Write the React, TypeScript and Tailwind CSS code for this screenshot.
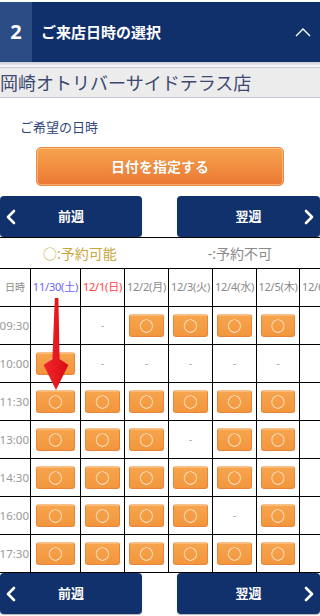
import React from 'react'

const FONT = "font-['Noto_Sans','Noto_Sans_CJK_JP',sans-serif]"

const dates = [
  { label: '11/30(土)', color: 'text-[#6d5ff7]', w: 'w-[50px]', pad: 'px-[5px]' },
  { label: '12/1(日)', color: 'text-[#ff3f3f]', w: 'w-[44px]', pad: 'px-[4px]' },
  { label: '12/2(月)', color: 'text-[#8a8a8a]', w: 'w-[44px]', pad: 'px-[4px]' },
  { label: '12/3(火)', color: 'text-[#8a8a8a]', w: 'w-[44px]', pad: 'px-[4px]' },
  { label: '12/4(水)', color: 'text-[#8a8a8a]', w: 'w-[44px]', pad: 'px-[4px]' },
  { label: '12/5(木)', color: 'text-[#8a8a8a]', w: 'w-[43px]', pad: 'px-[4px]' },
  { label: '12/6(金)', color: 'text-[#8a8a8a]', w: 'w-[44px]', pad: 'px-[4px]' },
]

// 1 = bookable, 0 = not
const slots: { time: string; open: number[] }[] = [
  { time: '09:30', open: [0, 0, 1, 1, 1, 1, 0] },
  { time: '10:00', open: [1, 0, 0, 0, 0, 0, 0] },
  { time: '11:30', open: [1, 1, 1, 1, 1, 1, 0] },
  { time: '13:00', open: [1, 1, 1, 0, 1, 1, 0] },
  { time: '14:30', open: [1, 1, 1, 1, 1, 1, 0] },
  { time: '16:00', open: [1, 1, 1, 1, 0, 1, 0] },
  { time: '17:30', open: [1, 1, 1, 1, 1, 1, 0] },
]

function Chevron({ dir }: { dir: 'left' | 'right' }) {
  return (
    <svg width="10" height="16" viewBox="0 0 10 16" className="shrink-0">
      <polyline
        points={dir === 'left' ? '8,2 2,8 8,14' : '2,2 8,8 2,14'}
        fill="none"
        stroke="white"
        strokeWidth="2.6"
        strokeLinecap="round"
        strokeLinejoin="round"
      />
    </svg>
  )
}

function WeekNav() {
  return (
    <div className="flex justify-between">
      <button className="relative flex h-[41px] w-[142px] items-center justify-center rounded-[4px] bg-[#11316d] shadow-[0_1px_1px_rgba(0,0,0,0.3)]">
        <span className="absolute left-[6px] top-[13px]">
          <Chevron dir="left" />
        </span>
        <span className="text-[13px] font-bold text-white">前週</span>
      </button>
      <button className="relative flex h-[41px] w-[143px] items-center justify-center rounded-[4px] bg-[#11316d] shadow-[0_1px_1px_rgba(0,0,0,0.3)]">
        <span className="text-[13px] font-bold text-white">翌週</span>
        <span className="absolute right-[6px] top-[13px]">
          <Chevron dir="right" />
        </span>
      </button>
    </div>
  )
}

function SlotButton() {
  return (
    <div className="flex h-[23px] w-full items-center justify-center rounded-[3px] border border-[#e8853c] border-t-[#f8bf86] bg-gradient-to-b from-[#f6a54e] to-[#f2963c] shadow-[inset_0_1px_0_rgba(255,255,255,0.25)]">
      <span className="text-[14px] leading-none text-white">○</span>
    </div>
  )
}

function Arrow() {
  return (
    <svg
      className="pointer-events-none absolute left-0 top-0"
      width="320"
      height="616"
      viewBox="0 0 320 616"
    >
      <defs>
        <linearGradient id="ar" x1="0" x2="1" y1="0" y2="0">
          <stop offset="0" stopColor="#f2262a" />
          <stop offset="1" stopColor="#d80d12" />
        </linearGradient>
      </defs>
      <polygon
        points="54.8,298 58.4,298 59.6,359 68.4,365 56,390 43.6,365 52.4,359"
        fill="url(#ar)"
      />
    </svg>
  )
}

export default function App() {
  return (
    <div className={`relative h-[616px] w-[320px] overflow-hidden bg-white ${FONT}`}>
      {/* section header */}
      <div className="pt-[2px]">
        <div className="flex h-[60px] items-stretch bg-[#10306c]">
          <div className="flex w-[32px] items-center justify-center bg-[#2b4c84]">
            <span className="text-[20px] font-bold text-white">2</span>
          </div>
          <div className="flex flex-1 items-center pl-[9px] text-[15px] font-bold text-white">
            ご来店日時の選択
          </div>
          <div className="flex items-center pr-[9px]">
            <svg width="16" height="10" viewBox="0 0 16 10">
              <polyline points="1,9 8,2 15,9" fill="none" stroke="white" strokeWidth="1.4" />
            </svg>
          </div>
        </div>
        <div className="h-[5px] bg-gradient-to-b from-[#c9ccd3] to-white" />
      </div>

      {/* store name */}
      <div className="flex h-[31px] items-center border-y border-[#c4c9d2] bg-[#ececec]">
        <span className="text-[18px] leading-none text-[#3b4970]">岡崎オトリバーサイドテラス店</span>
      </div>

      <div className="mt-[20px] pl-[20px] text-[13px] leading-[18px] text-[#2f467a]">ご希望の日時</div>

      <div className="mx-[36px] mt-[11px]">
        <button className="flex h-[39px] w-full items-center justify-center rounded-[5px] border border-[#ec8a44] bg-gradient-to-b from-[#f6a44e] to-[#eb7733] shadow-[inset_0_0_0_1px_rgba(255,214,170,0.55)]">
          <span className="text-[14px] font-bold text-white [text-shadow:0_0_1px_rgba(160,70,0,0.4)]">日付を指定する</span>
        </button>
      </div>

      <div className="mt-[10px]">
        <WeekNav />
      </div>

      {/* legend */}
      <div className="flex h-[31px] items-center border-t border-black">
        <div className="w-[170px] text-center text-[14px] text-[#c8a83d]">○:予約可能</div>
        <div className="w-[170px] text-center text-[14px] text-[#8a8a8a]">-:予約不可</div>
      </div>

      {/* timetable */}
      <div className="overflow-hidden border-t border-black">
        <div className="w-max">
          <div className="flex h-[38px] border-b border-black">
            <div className="flex w-[31px] shrink-0 items-center justify-center border-r border-black text-[10px] text-[#8a8a8a]">
              日時
            </div>
            {dates.map((d) => (
              <div
                key={d.label}
                className={`flex shrink-0 items-center justify-center border-r border-black text-[11px] tracking-[-0.2px] ${d.w} ${d.color}`}
              >
                {d.label}
              </div>
            ))}
          </div>
          {slots.map((s) => (
            <div key={s.time} className="flex h-[38px] border-b border-black">
              <div className="flex w-[31px] shrink-0 items-center justify-end border-r border-black pr-[1px] text-[11.5px] text-[#999999]">
                {s.time}
              </div>
              {dates.map((d, i) => (
                <div
                  key={d.label}
                  className={`flex shrink-0 items-center justify-center border-r border-black ${d.w} ${d.pad}`}
                >
                  {s.open[i] ? (
                    <SlotButton />
                  ) : (
                    <span className="text-[11px] text-[#aaaaaa]">-</span>
                  )}
                </div>
              ))}
            </div>
          ))}
        </div>
      </div>

      <WeekNav />

      <Arrow />
    </div>
  )
}
